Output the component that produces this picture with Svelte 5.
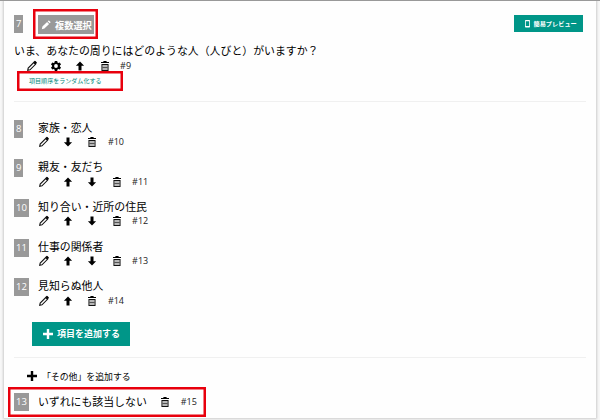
<script>
    const question = {
        no: 7,
        type: "複数選択",
        text: "いま、あなたの周りにはどのような人（人びと）がいますか？",
        actions: ["edit", "gear", "up", "trash"],
        id: 9
    };

    const choices = [
        { no: 8, text: "家族・恋人", actions: ["edit", "down", "trash"], id: 10 },
        { no: 9, text: "親友・友だち", actions: ["edit", "up", "down", "trash"], id: 11 },
        { no: 10, text: "知り合い・近所の住民", actions: ["edit", "up", "down", "trash"], id: 12 },
        { no: 11, text: "仕事の関係者", actions: ["edit", "up", "down", "trash"], id: 13 },
        { no: 12, text: "見知らぬ他人", actions: ["edit", "up", "trash"], id: 14 }
    ];
</script>

{#snippet icon(name)}
    <svg class="icon" viewBox="0 0 12 12">
        {#if name == "edit"}
            <path class="line" d="M1.7 10.3l.5-2.3 5.5-5.5 1.8 1.8L4 9.8z" />
            <path d="M7.5 2l1-1q.4-.4.9 0l1.300 1.300q.4.5 0 .9l-1 1z" />
        {:else if name == "gear"}
            <path fill-rule="evenodd" d="M4.8 1h2.4l.3 1.400.9.5 1.400-.4 1.200 2.100-1.100.9v1l1.100.9-1.200 2.100-1.400-.4-.9.5-.3 1.400H4.8l-.3-1.400-.9-.5-1.400.4-1.200-2.100 1.100-.9v-1l-1.100-.9 1.200-2.100 1.400.4.9-.5zM6 4.100a1.900 1.900 0 1 0 0 3.800a1.900 1.900 0 1 0 0-3.800z" />
        {:else if name == "up"}
            <path d="M6 1.400l4.100 4.300H7.500v4.900h-3V5.700H1.900z" />
        {:else if name == "down"}
            <path d="M6 10.600L1.900 6.300h2.600V1.400h3v4.900h2.600z" />
        {:else if name == "trash"}
            <path d="M2 2h2.400V1h3.200v1H10v1.100H2z" />
            <path class="line" d="M3 4.500h6v6H3z" />
            <path class="thin" d="M5 5v5M7 5v5M3.500 7.500h5" />
        {:else if name == "plus"}
            <path d="M4.800 1h2.400v3.800H11v2.400H7.200V11H4.800V7.200H1V4.800h3.800z" />
        {/if}
    </svg>
{/snippet}

{#snippet actionRow(item)}
    <div class="actions">
        {#each item.actions as name}
            {@render icon(name)}
        {/each}
        <span class="id">#{item.id}</span>
    </div>
{/snippet}

<div class="page">
    <div class="panel">
        <section class="question">
            <div class="head">
                <span class="no">{question.no}</span>
                <span class="type marked">
                    <svg viewBox="0 0 12 12">
                        <path d="M1 11l.7-3.100 5.600-5.600 2.400 2.400-5.600 5.600zM8 1.600l.8-.8q.5-.4 1 0l1.400 1.400q.4.5 0 1l-.8.8z" />
                    </svg>
                    {question.type}
                </span>
                <button class="preview">
                    <svg viewBox="0 0 5 8">
                        <path fill-rule="evenodd" d="M.7 0h3.600q.7 0 .7.7v6.100q0 .7-.7.7H.7Q0 7.500 0 6.800V.7Q0 0 .7 0zM.8 1.200v4.700h3.400V1.200z" />
                    </svg>
                    簡易プレビュー
                </button>
            </div>
            <div class="title">{question.text}</div>
            {@render actionRow(question)}
            <div class="random marked">項目順序をランダム化する</div>
        </section>

        <section class="choices">
            {#each choices as choice}
                <div class="choice">
                    <span class="no">{choice.no}</span>
                    <div>
                        <div class="title">{choice.text}</div>
                        {@render actionRow(choice)}
                    </div>
                </div>
            {/each}
            <button class="add">{@render icon("plus")}項目を追加する</button>
        </section>

        <section class="others">
            <div class="other">{@render icon("plus")}「その他」を追加する</div>
            <div class="none marked">
                <span class="no">13</span>
                <span class="title">いずれにも該当しない</span>
                {@render icon("trash")}
                <span class="id">#15</span>
            </div>
        </section>
    </div>
</div>

<style>
    :global(body) {
        background: #f7f7f7;
    }

    .page {
        box-sizing: border-box;
        height: 420px;
        padding: 0 4px;
        border-top: 1px solid #999;
        font-family: "Open Sans", "Noto Sans CJK JP", sans-serif;
        color: #000;
        overflow: hidden;
    }

    .panel {
        box-sizing: border-box;
        width: 592px;
        height: 417px;
        padding: 0 10px;
        background: #fefefe;
        box-shadow: 0 0 2px 1px #ccc;
    }

    .question {
        box-sizing: border-box;
        height: 101px;
        padding-top: 14px;
        border-bottom: 1px solid #f0f0f0;
    }

    .head {
        display: flex;
        align-items: flex-start;
        height: 28px;
    }

    .no {
        flex: none;
        box-sizing: border-box;
        height: 18px;
        padding: 0 2px;
        background: #999;
        color: #fff;
        font-size: 9.5px;
        line-height: 18px;
    }

    .type {
        display: flex;
        align-items: center;
        gap: 4px;
        box-sizing: border-box;
        width: 56px;
        height: 19px;
        margin-left: 14.600px;
        padding-left: 3px;
        background: #999;
        color: #fff;
        font-size: 9.2px;
        font-weight: 600;
        white-space: nowrap;
    }

    .type svg {
        flex: none;
        width: 10px;
        height: 10px;
        fill: #fff;
    }

    /* red frame drawn over the block without moving it */
    .marked {
        position: relative;
    }

    .marked::after {
        content: "";
        position: absolute;
        inset: 0;
        border: 2px solid #e8000d;
        box-shadow: inset 0 0 0 0.5px #e8000d;
    }

    .type::after {
        inset: -6px -4px -5px -5px;
    }

    button {
        display: flex;
        align-items: center;
        border: 0;
        background: #009688;
        color: #fff;
        font-family: inherit;
        font-weight: 700;
        white-space: nowrap;
    }

    .preview {
        gap: 3.500px;
        width: 69px;
        height: 17px;
        margin-left: auto;
        margin-right: 3px;
        padding: 0 0 0 11px;
        font-size: 6.200px;
    }

    .preview svg {
        flex: none;
        width: 5px;
        height: 8px;
        fill: #fff;
    }

    .title {
        font-size: 10.900px;
        line-height: 16px;
        white-space: nowrap;
    }

    .question > .title {
        position: relative;
        top: 0;
    }

    .icon {
        flex: none;
        width: 12px;
        height: 12px;
        fill: #000;
    }

    .line {
        fill: none;
        stroke: #111;
        stroke-width: 1.1;
    }

    .thin {
        fill: none;
        stroke: #111;
        stroke-width: 0.6;
    }

    .actions {
        display: flex;
        align-items: center;
        gap: 12.200px;
        height: 12px;
    }

    .id {
        color: #222;
        font-size: 9px;
        line-height: 12px;
        margin-left: -2.700px;
    }

    .question .actions {
        padding-left: 12px;
        height: 13px;
    }

    .random {
        box-sizing: border-box;
        width: 106px;
        height: 20px;
        margin: -1px 0 0 3px;
        padding-left: 12px;
        color: #00897b;
        font-size: 6.050px;
        line-height: 20px;
    }

    .choices {
        box-sizing: border-box;
        height: 256px;
        padding-top: 17.500px;
        border-bottom: 1px solid #f0f0f0;
    }

    .choice {
        display: grid;
        grid-template-columns: 24px 1fr;
        align-items: start;
        height: 39.700px;
    }

    .choice .no {
        justify-self: start;
    }

    .choice .actions {
        margin-top: 0.500px;
    }

    .add {
        gap: 3px;
        width: 98px;
        height: 24px;
        margin: 4px 0 0 18px;
        padding: 0 0 0 10px;
        font-size: 9px;
    }

    .add .icon {
        fill: #fff;
    }

    .other {
        display: flex;
        align-items: center;
        gap: 4px;
        height: 16px;
        padding: 10px 0 3px 12px;
        font-size: 8.900px;
    }

    .none {
        display: flex;
        align-items: center;
        box-sizing: border-box;
        width: 198px;
        height: 30px;
        margin-left: -6px;
        padding-left: 6px;
    }

    .none .title {
        margin-left: 9px;
    }

    .none .icon {
        margin-left: 12px;
    }

    .none .id {
        margin-left: 10px;
    }
</style>
